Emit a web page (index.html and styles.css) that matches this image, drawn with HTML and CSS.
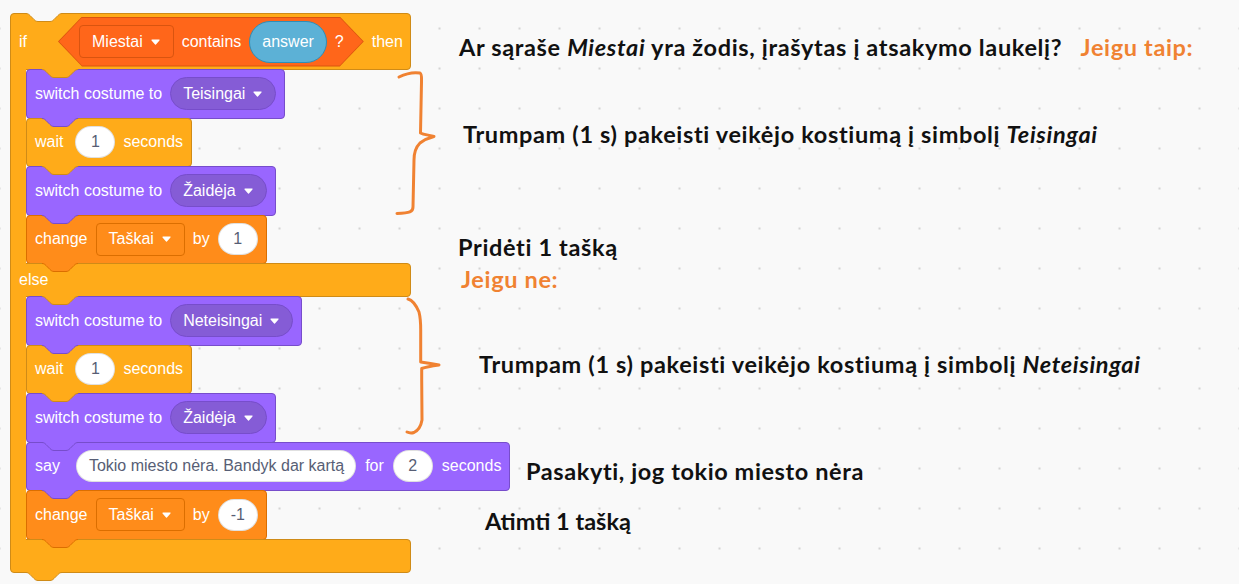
FILE: index.html
```html
<!DOCTYPE html>
<html lang="lt">
<head>
<meta charset="utf-8">
<title>Scratch if-else</title>
<link rel="stylesheet" href="styles.css">
</head>
<body>
<div class="workspace">
  <div class="script">
    <div class="c-block">
      <div class="c-top">
        <svg class="notch" width="36" height="10" viewBox="0 0 36 10"><path class="f" d="M0 0H36V0.5c-2 0-3 1-4 2l-4 4c-1 1-2 2-4 2h-12c-2 0-3-1-4-2l-4-4c-1-1-2-2-4-2Z"/><path class="s" d="M0 0.5c2 0 3 1 4 2l4 4c1 1 2 2 4 2h12c2 0 3-1 4-2l4-4c1-1 2-2 4-2"/></svg>
        <span class="lbl">if</span>
        <div class="hex">
          <span class="dd dd-list">Miestai<svg class="arr" width="9" height="6" viewBox="0 0 9 6"><path d="M1 1L4.5 5L8 1Z"/></svg></span>
          <span class="lbl">contains</span>
          <span class="rep">answer</span>
          <span class="lbl">?</span>
        </div>
        <span class="lbl then">then</span>
        <svg class="tab tab-in" width="36" height="10" viewBox="0 0 36 10"><path class="f" d="M0 0H36V0.5c-2 0-3 1-4 2l-4 4c-1 1-2 2-4 2h-12c-2 0-3-1-4-2l-4-4c-1-1-2-2-4-2Z"/><path class="s" d="M0 0.5c2 0 3 1 4 2l4 4c1 1 2 2 4 2h12c2 0 3-1 4-2l4-4c1-1 2-2 4-2"/></svg>
      </div>

      <div class="c-mouth">
        <div class="c-arm"></div>
        <div class="stack">
          <div class="block looks">
            <span class="lbl">switch costume to</span>
            <span class="dd dd-looks">Teisingai<svg class="arr" width="9" height="6" viewBox="0 0 9 6"><path d="M1 1L4.5 5L8 1Z"/></svg></span>
            <svg class="tab" width="36" height="10" viewBox="0 0 36 10"><path class="f" d="M0 0H36V0.5c-2 0-3 1-4 2l-4 4c-1 1-2 2-4 2h-12c-2 0-3-1-4-2l-4-4c-1-1-2-2-4-2Z"/><path class="s" d="M0 0.5c2 0 3 1 4 2l4 4c1 1 2 2 4 2h12c2 0 3-1 4-2l4-4c1-1 2-2 4-2"/></svg>
          </div>
          <div class="block control">
            <span class="lbl">wait</span>
            <span class="num num-wait">1</span>
            <span class="lbl">seconds</span>
            <svg class="tab" width="36" height="10" viewBox="0 0 36 10"><path class="f" d="M0 0H36V0.5c-2 0-3 1-4 2l-4 4c-1 1-2 2-4 2h-12c-2 0-3-1-4-2l-4-4c-1-1-2-2-4-2Z"/><path class="s" d="M0 0.5c2 0 3 1 4 2l4 4c1 1 2 2 4 2h12c2 0 3-1 4-2l4-4c1-1 2-2 4-2"/></svg>
          </div>
          <div class="block looks">
            <span class="lbl">switch costume to</span>
            <span class="dd dd-looks">Žaidėja<svg class="arr" width="9" height="6" viewBox="0 0 9 6"><path d="M1 1L4.5 5L8 1Z"/></svg></span>
            <svg class="tab" width="36" height="10" viewBox="0 0 36 10"><path class="f" d="M0 0H36V0.5c-2 0-3 1-4 2l-4 4c-1 1-2 2-4 2h-12c-2 0-3-1-4-2l-4-4c-1-1-2-2-4-2Z"/><path class="s" d="M0 0.5c2 0 3 1 4 2l4 4c1 1 2 2 4 2h12c2 0 3-1 4-2l4-4c1-1 2-2 4-2"/></svg>
          </div>
          <div class="block data">
            <span class="lbl">change</span>
            <span class="dd dd-data">Taškai<svg class="arr" width="9" height="6" viewBox="0 0 9 6"><path d="M1 1L4.5 5L8 1Z"/></svg></span>
            <span class="lbl">by</span>
            <span class="num">1</span>
            <svg class="tab" width="36" height="10" viewBox="0 0 36 10"><path class="f" d="M0 0H36V0.5c-2 0-3 1-4 2l-4 4c-1 1-2 2-4 2h-12c-2 0-3-1-4-2l-4-4c-1-1-2-2-4-2Z"/><path class="s" d="M0 0.5c2 0 3 1 4 2l4 4c1 1 2 2 4 2h12c2 0 3-1 4-2l4-4c1-1 2-2 4-2"/></svg>
          </div>
        </div>
      </div>

      <div class="c-mid">
        <span class="lbl">else</span>
        <svg class="tab tab-in" width="36" height="10" viewBox="0 0 36 10"><path class="f" d="M0 0H36V0.5c-2 0-3 1-4 2l-4 4c-1 1-2 2-4 2h-12c-2 0-3-1-4-2l-4-4c-1-1-2-2-4-2Z"/><path class="s" d="M0 0.5c2 0 3 1 4 2l4 4c1 1 2 2 4 2h12c2 0 3-1 4-2l4-4c1-1 2-2 4-2"/></svg>
      </div>

      <div class="c-mouth">
        <div class="c-arm"></div>
        <div class="stack">
          <div class="block looks">
            <span class="lbl">switch costume to</span>
            <span class="dd dd-looks">Neteisingai<svg class="arr" width="9" height="6" viewBox="0 0 9 6"><path d="M1 1L4.5 5L8 1Z"/></svg></span>
            <svg class="tab" width="36" height="10" viewBox="0 0 36 10"><path class="f" d="M0 0H36V0.5c-2 0-3 1-4 2l-4 4c-1 1-2 2-4 2h-12c-2 0-3-1-4-2l-4-4c-1-1-2-2-4-2Z"/><path class="s" d="M0 0.5c2 0 3 1 4 2l4 4c1 1 2 2 4 2h12c2 0 3-1 4-2l4-4c1-1 2-2 4-2"/></svg>
          </div>
          <div class="block control">
            <span class="lbl">wait</span>
            <span class="num num-wait">1</span>
            <span class="lbl">seconds</span>
            <svg class="tab" width="36" height="10" viewBox="0 0 36 10"><path class="f" d="M0 0H36V0.5c-2 0-3 1-4 2l-4 4c-1 1-2 2-4 2h-12c-2 0-3-1-4-2l-4-4c-1-1-2-2-4-2Z"/><path class="s" d="M0 0.5c2 0 3 1 4 2l4 4c1 1 2 2 4 2h12c2 0 3-1 4-2l4-4c1-1 2-2 4-2"/></svg>
          </div>
          <div class="block looks">
            <span class="lbl">switch costume to</span>
            <span class="dd dd-looks">Žaidėja<svg class="arr" width="9" height="6" viewBox="0 0 9 6"><path d="M1 1L4.5 5L8 1Z"/></svg></span>
            <svg class="tab" width="36" height="10" viewBox="0 0 36 10"><path class="f" d="M0 0H36V0.5c-2 0-3 1-4 2l-4 4c-1 1-2 2-4 2h-12c-2 0-3-1-4-2l-4-4c-1-1-2-2-4-2Z"/><path class="s" d="M0 0.5c2 0 3 1 4 2l4 4c1 1 2 2 4 2h12c2 0 3-1 4-2l4-4c1-1 2-2 4-2"/></svg>
          </div>
          <div class="block looks say">
            <span class="lbl">say</span>
            <span class="txt">Tokio miesto nėra. Bandyk dar kartą</span>
            <span class="lbl">for</span>
            <span class="num">2</span>
            <span class="lbl">seconds</span>
            <svg class="tab" width="36" height="10" viewBox="0 0 36 10"><path class="f" d="M0 0H36V0.5c-2 0-3 1-4 2l-4 4c-1 1-2 2-4 2h-12c-2 0-3-1-4-2l-4-4c-1-1-2-2-4-2Z"/><path class="s" d="M0 0.5c2 0 3 1 4 2l4 4c1 1 2 2 4 2h12c2 0 3-1 4-2l4-4c1-1 2-2 4-2"/></svg>
          </div>
          <div class="block data">
            <span class="lbl">change</span>
            <span class="dd dd-data">Taškai<svg class="arr" width="9" height="6" viewBox="0 0 9 6"><path d="M1 1L4.5 5L8 1Z"/></svg></span>
            <span class="lbl">by</span>
            <span class="num">-1</span>
            <svg class="tab" width="36" height="10" viewBox="0 0 36 10"><path class="f" d="M0 0H36V0.5c-2 0-3 1-4 2l-4 4c-1 1-2 2-4 2h-12c-2 0-3-1-4-2l-4-4c-1-1-2-2-4-2Z"/><path class="s" d="M0 0.5c2 0 3 1 4 2l4 4c1 1 2 2 4 2h12c2 0 3-1 4-2l4-4c1-1 2-2 4-2"/></svg>
          </div>
        </div>
      </div>

      <div class="c-bottom">
        <svg class="tab" width="36" height="10" viewBox="0 0 36 10"><path class="f" d="M0 0H36V0.5c-2 0-3 1-4 2l-4 4c-1 1-2 2-4 2h-12c-2 0-3-1-4-2l-4-4c-1-1-2-2-4-2Z"/><path class="s" d="M0 0.5c2 0 3 1 4 2l4 4c1 1 2 2 4 2h12c2 0 3-1 4-2l4-4c1-1 2-2 4-2"/></svg>
      </div>
    </div>
  </div>

  <div class="notes">
    <p class="note n1">Ar sąraše <i>Miestai</i> yra žodis, įrašytas į atsakymo laukelį? <span class="accent gap">Jeigu taip:</span></p>
    <p class="note n2">Trumpam (1 s) pakeisti veikėjo kostiumą į simbolį <i>Teisingai</i></p>
    <p class="note n3">Pridėti 1 tašką</p>
    <p class="note n4 accent">Jeigu ne:</p>
    <p class="note n5">Trumpam (1 s) pakeisti veikėjo kostiumą į simbolį <i>Neteisingai</i></p>
    <p class="note n6">Pasakyti, jog tokio miesto nėra</p>
    <p class="note n7">Atimti 1 tašką</p>
  </div>

  <svg class="brace brace-1" width="50" height="150" viewBox="390 70 50 150"><path d="M399 77C405 74 414 72 420 73C422 74 421.5 78 421.5 82L420.5 133C424 135 430 135 434 136.5C428 138 424 140 420 143C416 147 414 152 414 160L413 207C413 212 410 213 397 213.5"/></svg>
  <svg class="brace brace-2" width="50" height="145" viewBox="400 295 50 145"><path d="M408 299C412 300 416 305 419 312C420.5 318 420.7 322 420.7 330L420.7 362C428 363 434 364 439 365C432 366 426 367 421.7 368.5L421.7 380L422 420C421 426 419 430 414 432.5C411 433.5 409 433 407 432"/></svg>
</div>
</body>
</html>
```

FILE: styles.css
```css
* { box-sizing: border-box; }
html, body { margin: 0; }
body {
  width: 1239px;
  height: 584px;
  overflow: hidden;
  background-color: #f9f9f9;
  background-image: radial-gradient(circle, #d4d4d4 0.9px, rgba(212,212,212,0) 1.6px);
  background-size: 40px 40px;
  background-position: 19.5px 8.5px;
  font-family: "Liberation Sans", Arial, sans-serif;
}
.workspace { position: relative; display: flex; height: 584px; }
.script { padding: 13px 0 0 10px; flex: none; }

/* ---------- colours ---------- */
.c-block, .control { --fill: #ffab19; --edge: #cf8b17; }
.looks { --fill: #9966ff; --edge: #774dcb; }
.data { --fill: #ff8c1a; --edge: #db6e00; }

.lbl { color: #fff; font-size: 16px; white-space: nowrap; line-height: 1; }

/* ---------- C block ---------- */
.c-block { width: 401px; display: flex; flex-direction: column; }
.c-top {
  position: relative;
  height: 57px;
  display: flex;
  align-items: center;
  padding: 0 8px;
  background: var(--fill);
  border: 1px solid var(--edge);
  border-radius: 4px 4px 4px 0;
}
.then { margin-left: 8px; }
.c-mouth { display: flex; align-items: stretch; }
.c-arm {
  width: 16px;
  flex: none;
  margin: -1px 0;
  background: var(--fill);
  border-left: 1px solid var(--edge);
  position: relative;
  z-index: 2;
}
.stack { display: flex; flex-direction: column; align-items: flex-start; }
.c-mid {
  position: relative;
  height: 34px;
  margin-top: -1px;
  display: flex;
  align-items: center;
  padding-left: 8px;
  background: var(--fill);
  border: 1px solid var(--edge);
  border-radius: 0 4px 4px 0;
}
.c-bottom {
  position: relative;
  height: 34.5px;
  margin-top: -1px;
  background: var(--fill);
  border: 1px solid var(--edge);
  border-radius: 0 4px 4px 4px;
}

/* ---------- stack blocks ---------- */
.block {
  position: relative;
  height: 49.5px;
  margin-top: -1px;
  display: flex;
  align-items: center;
  gap: 8px;
  padding: 0 8px;
  background: var(--fill);
  border: 1px solid var(--edge);
  border-radius: 4px;
}
.say { gap: 9px; }

/* tabs & notches */
.tab, .notch { position: absolute; overflow: visible; z-index: 5; left: 15px; }
.tab { top: 100%; }
.tab-in { left: 31px; }
.tab .f { fill: var(--fill); }
.tab .s, .notch .s { fill: none; stroke: var(--edge); stroke-width: 1; }
.notch { top: -1px; }
.notch .f { fill: #f9f9f9; }

/* ---------- boolean hexagon ---------- */
.hex {
  position: relative;
  height: 50px;
  margin-left: 31px;
  padding: 0 20px 0 21px;
  display: flex;
  align-items: center;
  gap: 8px;
}
.hex::before, .hex::after {
  content: "";
  position: absolute;
  clip-path: polygon(24px 0, calc(100% - 24px) 0, 100% 50%, calc(100% - 24px) 100%, 24px 100%, 0 50%);
}
.hex::before { inset: 0; background: #d9540f; }
.hex::after {
  inset: 1px;
  background: #ff661a;
  clip-path: polygon(23px 0, calc(100% - 23px) 0, 100% 50%, calc(100% - 23px) 100%, 23px 100%, 0 50%);
}
.hex > * { position: relative; z-index: 1; }

/* ---------- fields ---------- */
.dd {
  display: flex;
  align-items: center;
  gap: 8px;
  height: 33px;
  padding: 0 13px 0 12px;
  color: #fff;
  font-size: 16px;
  white-space: nowrap;
}
.dd-list { background: #ff661a; border: 1px solid #d9540f; border-radius: 4px; }
.dd-data { background: #ff8c1a; border: 1px solid #db6e00; border-radius: 4px; }
.dd-looks { background: #855cd6; border: 1px solid #774dcb; border-radius: 17px; }
.arr { flex: none; }
.arr path { fill: #fff; stroke: #fff; stroke-width: 1.2; stroke-linejoin: round; }

.rep {
  display: flex;
  align-items: center;
  height: 42px;
  padding: 0 12px;
  border-radius: 21px;
  background: #5cb1d6;
  border: 1px solid #2e8eb8;
  color: #fff;
  font-size: 16px;
}
.num {
  display: flex;
  align-items: center;
  justify-content: center;
  min-width: 40px;
  height: 32px;
  padding: 0 8px;
  border-radius: 16px;
  background: #fff;
  border: 1px solid rgba(0,0,0,0.12);
  color: #575e75;
  font-size: 16px;
}
.num-wait { margin-left: 4px; }
.txt {
  display: flex;
  align-items: center;
  height: 32px;
  margin-left: 7px;
  padding: 0 11px 0 12px;
  border-radius: 16px;
  background: #fff;
  border: 1px solid rgba(0,0,0,0.12);
  color: #575e75;
  font-size: 16px;
  white-space: nowrap;
}

/* ---------- notes ---------- */
.notes {
  display: flex;
  flex-direction: column;
  align-items: flex-start;
  padding-top: 33px;
  font-family: "Lato", "Noto Sans", sans-serif;
  font-weight: 700;
  font-size: 23.5px;
  letter-spacing: 0.65px;
  line-height: 28px;
  color: #111;
  white-space: nowrap;
}
.note { margin: 0; }
.note i { font-style: italic; }
.accent { color: #f08232; }
.gap { margin-left: 12px; }
.n1 { margin-left: 48px; }
.n2 { margin-left: 52px; margin-top: 59px; }
.n3 { margin-left: 47px; margin-top: 85px; }
.n4 { margin-left: 50px; margin-top: 4px; }
.n5 { margin-left: 68px; margin-top: 57px; }
.n6 { margin-left: 115px; margin-top: 79px; letter-spacing: 0.6px; }
.n7 { margin-left: 74px; margin-top: 22px; letter-spacing: 0; }

/* ---------- braces ---------- */
.brace { position: absolute; overflow: visible; }
.brace path { fill: none; stroke: #f08232; stroke-width: 3; stroke-linecap: round; stroke-linejoin: round; }
.brace-1 { left: 390px; top: 70px; }
.brace-2 { left: 400px; top: 295px; }
```
